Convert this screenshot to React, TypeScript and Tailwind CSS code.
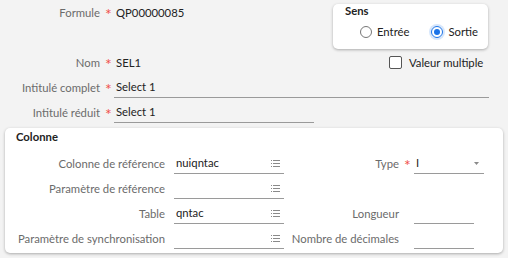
import React from "react";

const Star = () => (
  <span className="text-[#f0504a] text-[16px] leading-none w-[10px] pt-[2px]">*</span>
);

const ListIcon = () => (
  <svg width="9" height="7" viewBox="0 0 9 7" className="text-[#8a8a8a]">
    <rect x="0" y="0" width="1" height="1" fill="currentColor" />
    <rect x="2" y="0" width="7" height="1" fill="currentColor" />
    <rect x="0" y="3" width="1" height="1" fill="currentColor" />
    <rect x="2" y="3" width="7" height="1" fill="currentColor" />
    <rect x="0" y="6" width="1" height="1" fill="currentColor" />
    <rect x="2" y="6" width="7" height="1" fill="currentColor" />
  </svg>
);

const Field = ({
  value,
  width,
  icon,
}: {
  value?: string;
  width: string;
  icon?: React.ReactNode;
}) => (
  <div
    className={`${width} h-[21px] border-b border-[#9a9a9a] flex items-center justify-between pl-[2px] pr-[4px] text-[#222]`}
  >
    <span>{value}</span>
    {icon}
  </div>
);

const TopRow = ({ label, children }: { label: string; children: React.ReactNode }) => (
  <div className="h-[25px] flex items-center">
    <span className="w-[100px] text-right text-[#6b6b6b]">{label}</span>
    <span className="ml-[5px] flex items-center">
      <Star />
    </span>
    {children}
  </div>
);

const ColRow = ({
  label,
  value,
  right,
}: {
  label: string;
  value?: string;
  right?: React.ReactNode;
}) => (
  <div className="h-[25px] flex items-center">
    <span className="w-[160px] text-right text-[#6b6b6b]">{label}</span>
    <div className="ml-[9px]">
      <Field value={value} width="w-[110px]" icon={<ListIcon />} />
    </div>
    {right}
  </div>
);

export default function App() {
  return (
    <div
      className="w-[508px] h-[258px] bg-[#f3f3f3] text-[11.3px] leading-none overflow-hidden"
      style={{ fontFamily: "Lato, 'Open Sans', sans-serif" }}
    >
      <div className="flex h-[50px]">
        <div className="w-[333px]">
          <TopRow label="Formule">
            <span className="ml-[1px] text-[#222]">QP00000085</span>
          </TopRow>
        </div>
        <div className="mt-[4px] w-[155px] h-[45px] bg-white rounded-[5px] shadow-[0_1px_3px_rgba(0,0,0,0.3)] pl-[12px] pt-[1px]">
          <div className="font-bold text-[#222] h-[12px]">Sens</div>
          <div className="flex items-center mt-[9px] pl-[15px] text-[#222]">
            <span className="w-[12px] h-[12px] rounded-full border border-[#777] bg-white" />
            <span className="ml-[5px]">Entrée</span>
            <span className="ml-[22px] w-[12px] h-[12px] rounded-full border border-[#1a73e8] flex items-center justify-center shadow-[0_0_0_2px_rgba(26,115,232,0.18)]">
              <span className="w-[6px] h-[6px] rounded-full bg-[#1a73e8]" />
            </span>
            <span className="ml-[5px]">Sortie</span>
          </div>
        </div>
      </div>

      <div className="flex items-center">
        <div className="w-[389px]">
          <TopRow label="Nom">
            <span className="ml-[1px] text-[#222]">SEL1</span>
          </TopRow>
        </div>
        <span className="w-[13px] h-[13px] rounded-[2px] border border-[#555] bg-white" />
        <span className="ml-[7px] text-[#222]">Valeur multiple</span>
      </div>

      <TopRow label="Intitulé complet">
        <div className="-ml-[1px]">
          <Field value="Select 1" width="w-[375px]" />
        </div>
      </TopRow>
      <TopRow label="Intitulé réduit">
        <div className="-ml-[1px]">
          <Field value="Select 1" width="w-[200px]" />
        </div>
      </TopRow>

      <div className="mx-[5px] mt-[3px] h-[125px] bg-white rounded-[5px] shadow-[0_1px_3px_rgba(0,0,0,0.3)] pt-[2px]">
        <div className="pl-[11px] h-[14px] font-bold text-[#222] flex items-center">Colonne</div>
        <div className="mt-[7px]">
          <ColRow
            label="Colonne de référence"
            value="nuiqntac"
            right={
              <div className="flex items-center">
                <span className="w-[115px] text-right text-[#6b6b6b]">Type</span>
                <span className="ml-[5px] flex items-center">
                  <Star />
                </span>
                <div className="w-[70px] h-[21px] border-b border-[#9a9a9a] flex items-center justify-between pl-[2px] pr-[5px] text-[#222]">
                  <span>I</span>
                  <svg width="5" height="3" viewBox="0 0 5 3">
                    <path d="M0 0 L5 0 L2.5 3 Z" fill="#8a8a8a" />
                  </svg>
                </div>
              </div>
            }
          />
          <ColRow label="Paramètre de référence" />
          <ColRow
            label="Table"
            value="qntac"
            right={
              <div className="flex items-center">
                <span className="w-[115px] text-right text-[#6b6b6b]">Longueur</span>
                <div className="ml-[15px]">
                  <Field width="w-[60px]" />
                </div>
              </div>
            }
          />
          <ColRow
            label="Paramètre de synchronisation"
            right={
              <div className="flex items-center">
                <span className="w-[115px] text-right text-[#6b6b6b]">Nombre de décimales</span>
                <div className="ml-[15px]">
                  <Field width="w-[60px]" />
                </div>
              </div>
            }
          />
        </div>
      </div>
    </div>
  );
}
